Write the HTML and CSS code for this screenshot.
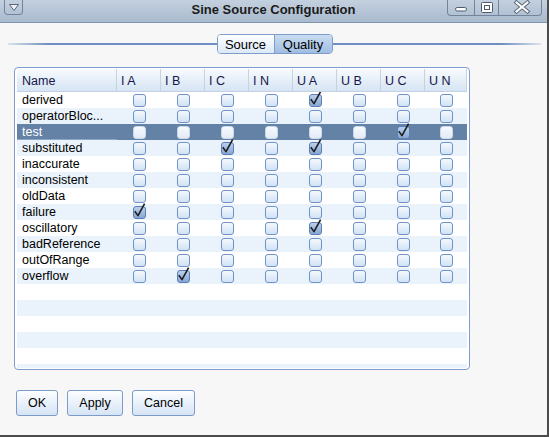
FILE: index.html
```html
<!DOCTYPE html>
<html lang="en">
<head>
    <meta charset="UTF-8">
    <title>Sine Source Configuration</title>
    <link rel="stylesheet" href="styles.css">
</head>
<body>
<div class="window">
    <div class="titlebar">
        <div class="tb-left">
            <span class="menu-btn">
                <svg width="17" height="14" viewBox="0 0 17 14"><polygon points="4.5,4.5 13.5,4.5 9,10.5" fill="#eef2f7" stroke="#5a6677" stroke-width="1" stroke-linejoin="round"/></svg>
            </span>
        </div>
        <div class="title">Sine Source Configuration</div>
        <div class="tb-right">
            <div class="win-btns">
                <span class="wb wb-min">
                    <svg width="26" height="15" viewBox="0 0 26 15"><rect x="7.5" y="7.5" width="11" height="3.5" rx="1.75" fill="#fff" stroke="#4f5b6b"/></svg>
                </span>
                <span class="wb wb-max">
                    <svg width="24" height="15" viewBox="0 0 24 15"><rect x="6.5" y="2.5" width="11" height="10" rx="1" fill="#fff" stroke="#4f5b6b"/><rect x="9.5" y="5.5" width="5" height="4" fill="none" stroke="#4f5b6b"/></svg>
                </span>
                <span class="wb wb-close">
                    <svg width="43" height="15" viewBox="0 0 43 15"><path d="M17.5 2.5 L28.5 11.5 M28.5 2.5 L17.5 11.5" stroke="#5b6676" stroke-width="4" stroke-linecap="square"/><path d="M17.5 2.5 L28.5 11.5 M28.5 2.5 L17.5 11.5" stroke="#fff" stroke-width="2" stroke-linecap="square"/></svg>
                </span>
            </div>
        </div>
    </div>

    <div class="tabs-row">
        <div class="tab-line left"></div>
        <div class="tabs">
            <span class="tab">Source</span>
            <span class="tab active">Quality</span>
        </div>
        <div class="tab-line right"></div>
    </div>

    <div class="table">
        <div class="thead">
            <div class="th first">Name</div>
            <div class="th">I A</div>
            <div class="th">I B</div>
            <div class="th">I C</div>
            <div class="th">I N</div>
            <div class="th">U A</div>
            <div class="th">U B</div>
            <div class="th">U C</div>
            <div class="th">U N</div>
        </div>
        <div class="tbody" id="rows"></div>
    </div>

    <div class="buttons">
        <button class="btn btn-ok">OK</button>
        <button class="btn btn-apply">Apply</button>
        <button class="btn btn-cancel">Cancel</button>
    </div>
</div>

<script>
    const cols = ['IA', 'IB', 'IC', 'IN', 'UA', 'UB', 'UC', 'UN'];
    const qualities = [
        ['derived', ['UA']],
        ['operatorBloc...', []],
        ['test', ['UC']],
        ['substituted', ['IC', 'UA']],
        ['inaccurate', []],
        ['inconsistent', []],
        ['oldData', []],
        ['failure', ['IA']],
        ['oscillatory', ['UA']],
        ['badReference', []],
        ['outOfRange', []],
        ['overflow', ['IB']]
    ];
    const selected = 2;
    const tick = '<svg class="tick" width="13" height="13" viewBox="0 0 13 13"><path d="M1.8 5.2 L5 9.6 L11.6 -2.4" fill="none" stroke="#1e1e1e" stroke-width="1.6" stroke-linejoin="round"/></svg>';

    const body = document.getElementById('rows');
    qualities.forEach((q, i) => {
        const row = document.createElement('div');
        row.className = 'row' + (i === selected ? ' sel' : '');
        let html = '<div class="name">' + q[0] + '</div>';
        cols.forEach(c => {
            const on = q[1].includes(c);
            html += '<div class="cell"><span class="cb' + (on ? ' on' : '') + '">' + (on ? tick : '') + '</span></div>';
        });
        row.innerHTML = html;
        body.appendChild(row);
    });
    // empty filler rows
    for (let i = 0; i < 6; i++) {
        const row = document.createElement('div');
        row.className = 'row';
        body.appendChild(row);
    }
</script>
</body>
</html>
```

FILE: styles.css
```css
html, body {
    margin: 0;
    padding: 0;
}

body {
    font-family: "Liberation Sans", Arial, sans-serif;
    font-size: 12.5px;
    color: #000;
    background-color: #f7f7f7;
}

.window {
    width: 547px;
    height: 435px;
    background-color: #f7f7f7;
    border-right: 2px solid #4b4b4b;
    border-bottom: 2px solid #4b4b4b;
    overflow: hidden;
}

/* title bar */
.titlebar {
    height: 22px;
    display: grid;
    grid-template-columns: 1fr auto 1fr;
    align-items: start;
    background: linear-gradient(#c3d0df, #a9bace);
    border-bottom: 1px solid #8094ab;
}

.title {
    font-size: 13px;
    font-weight: bold;
    line-height: 20px;
    color: #1b1b1b;
}

.tb-left {
    display: flex;
}

.menu-btn {
    display: block;
    width: 17px;
    height: 14px;
    margin-left: 4px;
    border: 1px solid #76849a;
    border-top: none;
    border-radius: 0 0 4px 4px;
}

.menu-btn svg,
.wb svg {
    display: block;
}

.tb-right {
    display: flex;
    justify-content: flex-end;
}

.win-btns {
    display: flex;
    height: 15px;
    margin-right: 5px;
    border: 1px solid #76849a;
    border-top: none;
    border-radius: 0 0 4px 4px;
}

.wb {
    display: block;
    height: 15px;
}

.wb + .wb {
    border-left: 1px solid #76849a;
}

.wb-min { width: 26px; }
.wb-max { width: 23px; }
.wb-close { width: 42px; }

/* tabs */
.tabs-row {
    display: flex;
    align-items: center;
    height: 20px;
    margin-top: 11px;
    padding: 0 6px 0 8px;
}

.tab-line {
    flex: 1;
    height: 2px;
}

.tab-line.left {
    background: linear-gradient(to right, rgba(110, 142, 190, 0.2), #6f8fc0 40px);
}

.tab-line.right {
    background: linear-gradient(to left, rgba(110, 142, 190, 0.2), #6f8fc0 40px);
}

.tabs {
    display: flex;
    height: 20px;
    border: 1px solid #7e9dcb;
    border-radius: 4px;
    box-sizing: border-box;
    overflow: hidden;
}

.tab {
    display: flex;
    align-items: center;
    justify-content: center;
    width: 56px;
    font-size: 13px;
    background: linear-gradient(#ffffff, #dbe8f7);
}

.tab.active {
    width: 57px;
    border-left: 1px solid #7e9dcb;
    background: linear-gradient(#cadcf1, #9fbde2);
}

/* table */
.table {
    width: 456px;
    height: 303px;
    margin: 13px 0 0 14px;
    box-sizing: border-box;
    border: 1px solid #7f9dca;
    border-radius: 4px;
    padding: 1px 2px;
    background-color: #fff;
    overflow: hidden;
}

.thead,
.row {
    display: grid;
    grid-template-columns: 100px repeat(7, 44px) 42px;
}

.thead {
    height: 22px;
    background: linear-gradient(#f7fafd, #d6e4f4);
    border-bottom: 1px solid #c3d1e0;
}

.th {
    padding: 2px 0 0 4px;
    line-height: 20px;
    color: #16164a;
    border-right: 1px solid #c6d2df;
    white-space: nowrap;
}

.th.first {
    padding-left: 5px;
}

.tbody {
    height: 276px;
    overflow: hidden;
}

.row {
    height: 16px;
    line-height: 16px;
}

.row:nth-child(even) {
    background-color: #eaf3fb;
}

.row.sel {
    background-color: #6382a6;
    color: #fff;
}

.row.sel .name {
    box-shadow: inset 0 -1px #8ea7c6;
}

.name {
    padding-left: 5px;
    white-space: nowrap;
    overflow: hidden;
}

.cell {
    display: flex;
    align-items: center;
    justify-content: center;
}

.cb {
    position: relative;
    width: 13px;
    height: 13px;
    box-sizing: border-box;
    border: 1px solid #6d93c8;
    border-radius: 3px;
    background: linear-gradient(#f4f8fd, #d2e2f5);
}

.row.sel .cb {
    border-color: #c9d8ea;
    background: linear-gradient(#f6f9fd, #e2ebf6);
}

.cb.on,
.row.sel .cb.on {
    border-color: #5a7fb6;
    background: linear-gradient(#bad0ec, #86a7d3);
}

.tick {
    position: absolute;
    left: -1px;
    top: -1px;
    overflow: visible;
}

/* buttons */
.buttons {
    display: flex;
    gap: 9px;
    margin-top: 20px;
    padding-left: 16px;
}

.btn {
    height: 26px;
    padding: 0;
    font-family: "Liberation Sans", Arial, sans-serif;
    font-size: 12.5px;
    color: #000;
    border: 1px solid #7d9bc9;
    border-radius: 3px;
    background: linear-gradient(#fdfeff, #d5e4f5);
}

.btn-ok { width: 42px; }
.btn-apply { width: 56px; }
.btn-cancel { width: 63px; }
```
